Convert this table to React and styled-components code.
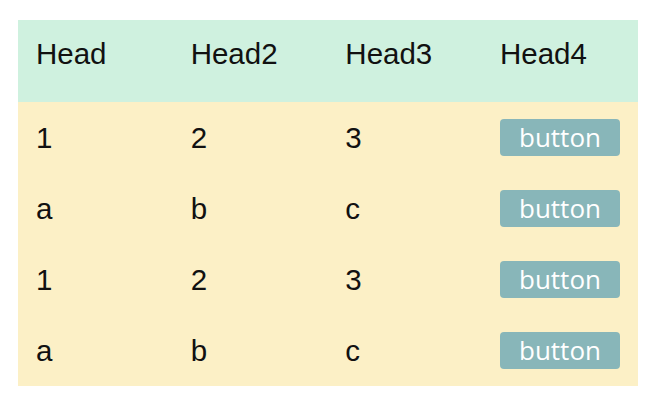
import React from "react";
import styled, { createGlobalStyle } from "styled-components";

const Global = createGlobalStyle`
  html, body { margin: 0; padding: 0; background: #ffffff; }
  body { font-family: "Liberation Sans", Arial, sans-serif; }
`;

const Page = styled.div`
  padding: 20px 28px 0 18px;
`;

const Table = styled.div`
  width: 620px;
  display: grid;
  grid-template-columns: repeat(4, 1fr);
`;

const HeadCell = styled.div`
  background: #cff1df;
  color: #111111;
  font-size: 29.5px;
  line-height: 34px;
  height: 82px;
  box-sizing: border-box;
  padding: 17px 18px 31px;
`;

const Cell = styled.div`
  background: #fcf0c6;
  color: #111111;
  font-size: 29.5px;
  line-height: 34px;
  height: 71px;
  box-sizing: border-box;
  padding: 0 18px;
  display: flex;
  align-items: center;
`;

const Button = styled.button`
  appearance: none;
  border: none;
  margin: 0;
  width: 120px;
  height: 37px;
  border-radius: 4px;
  background: #88b6b9;
  color: #ffffff;
  font-family: "Open Sans", sans-serif;
  font-size: 26px;
  line-height: 37px;
  padding: 0;
  text-align: center;
`;

const head = ["Head", "Head2", "Head3", "Head4"];
const rows = [
  ["1", "2", "3"],
  ["a", "b", "c"],
  ["1", "2", "3"],
  ["a", "b", "c"],
];

export default function App() {
  return (
    <Page>
      <Global />
      <Table>
        {head.map((h) => (
          <HeadCell key={h}>{h}</HeadCell>
        ))}
        {rows.map((r, i) => (
          <React.Fragment key={i}>
            {r.map((v, j) => (
              <Cell key={j}>{v}</Cell>
            ))}
            <Cell>
              <Button>button</Button>
            </Cell>
          </React.Fragment>
        ))}
      </Table>
    </Page>
  );
}
